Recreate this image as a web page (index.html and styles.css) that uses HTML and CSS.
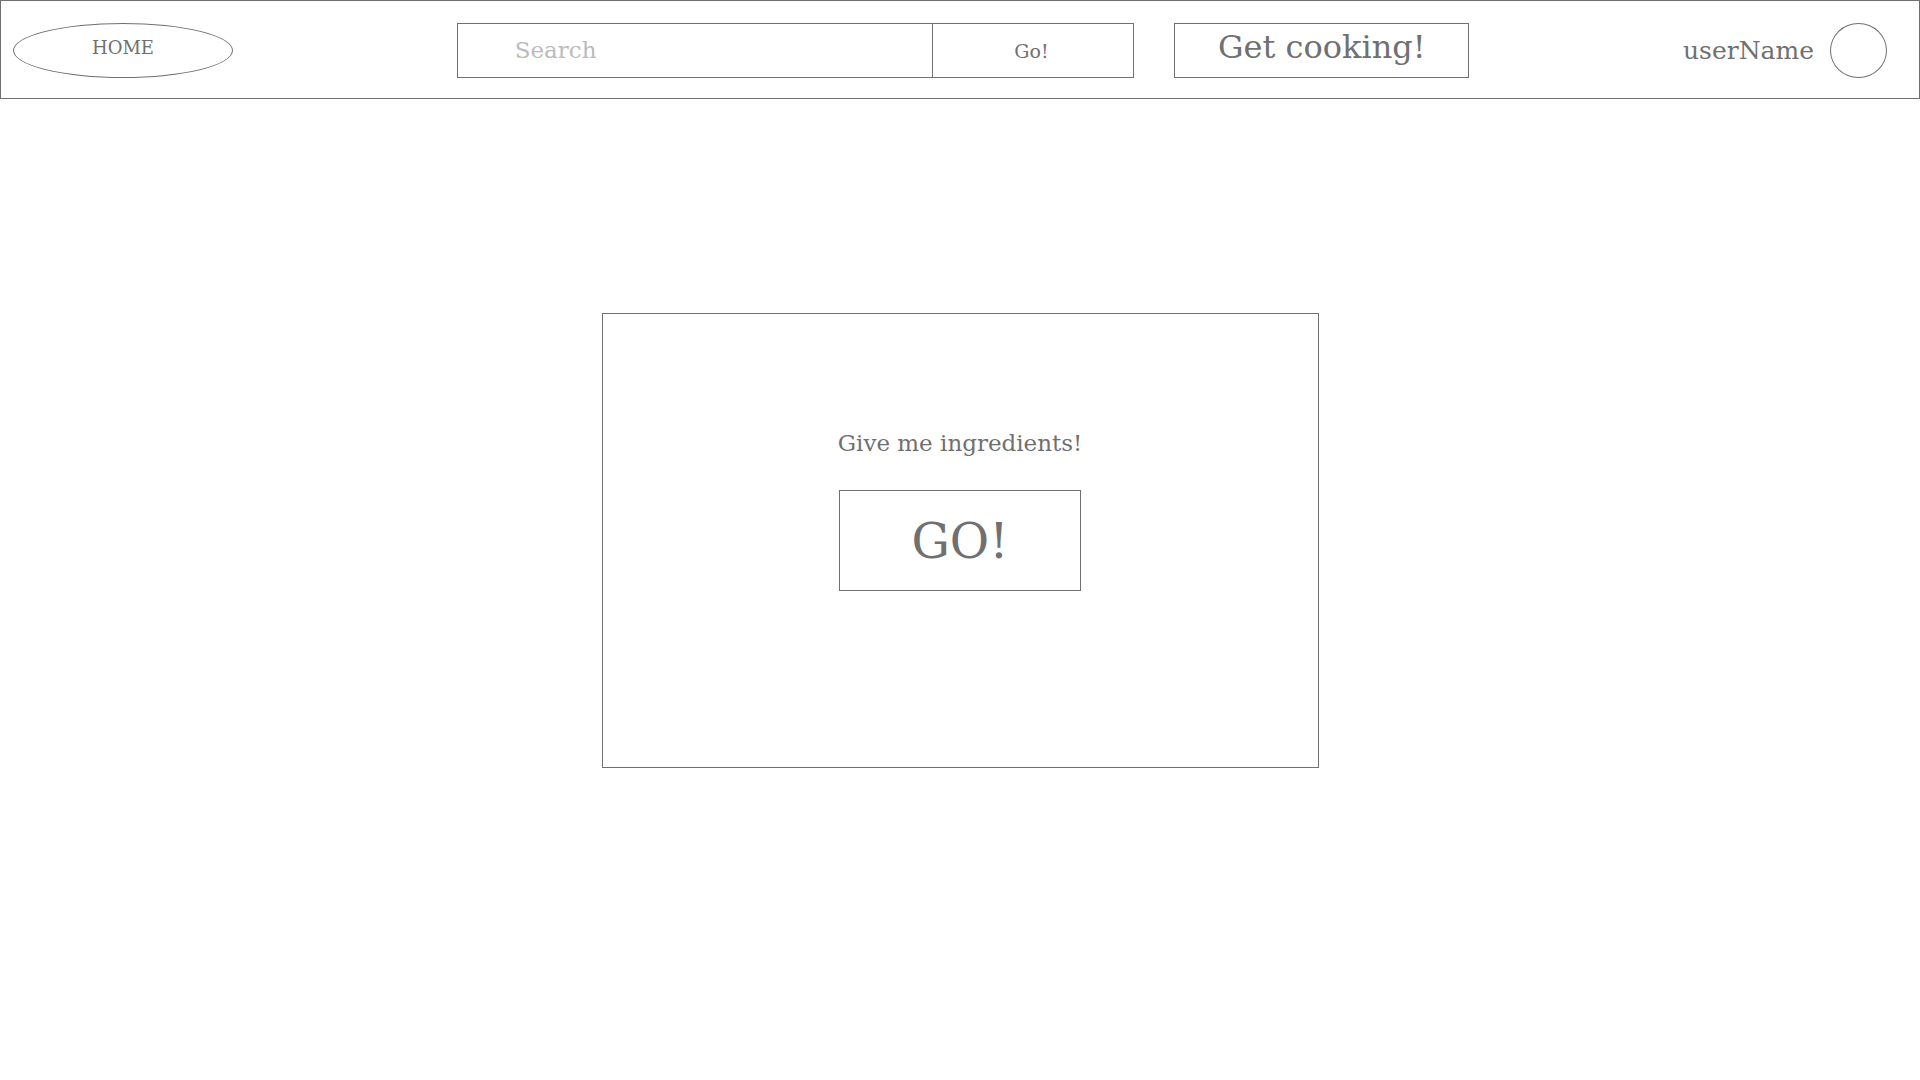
FILE: index.html
```html
<!DOCTYPE html>
<html lang="en">
<head>
<meta charset="utf-8">
<meta name="viewport" content="width=device-width, initial-scale=1">
<title>Get cooking!</title>
<link rel="stylesheet" href="styles.css">
</head>
<body>
<header class="topbar">
  <a class="home" href="#">HOME</a>
  <form class="search">
    <input class="search-input" type="text" placeholder="Search" aria-label="Search">
    <button class="search-go" type="button">Go!</button>
  </form>
  <button class="cook" type="button">Get cooking!</button>
  <a class="user" href="#">
    <span>userName</span>
    <span class="avatar"></span>
  </a>
</header>
<main class="main">
  <section class="card">
    <h1 class="card-title">Give me ingredients!</h1>
    <button class="card-go" type="button">GO!</button>
  </section>
</main>
</body>
</html>
```
FILE: styles.css
```css
* {
  box-sizing: border-box;
}

body {
  margin: 0;
  background: #fff;
  color: #707070;
  font-family: Rockwell, "DejaVu Serif", serif;
}

a {
  color: inherit;
  text-decoration: none;
}

button,
input {
  margin: 0;
  padding: 0;
  border: 1px solid #707070;
  border-radius: 0;
  background: #fff;
  color: inherit;
  font-family: inherit;
}

button {
  cursor: pointer;
}

.topbar {
  display: grid;
  grid-template-columns: 444fr 678fr 40fr 295fr 418fr;
  padding: 22px 32px 20px 12px;
  border: 1px solid #707070;
}

.home {
  display: flex;
  align-items: center;
  justify-content: center;
  width: 220px;
  height: 55px;
  padding-bottom: 6px;
  border: 1px solid #707070;
  border-radius: 50%;
  font-size: 18px;
}

.search {
  display: grid;
  grid-template-columns: 476fr 202fr;
  height: 55px;
}

.search-input {
  width: 100%;
  padding: 0 0 2px 57px;
  border-right: 0;
  font-size: 23px;
}

.search-input::placeholder {
  color: #bbb;
  opacity: 1;
}

.search-go {
  padding-right: 4px;
  font-size: 19px;
}

.cook {
  grid-column: 4;
  height: 55px;
  padding-bottom: 8px;
  font-size: 32px;
  white-space: nowrap;
}

.user {
  display: flex;
  align-items: center;
  justify-content: flex-end;
  gap: 16px;
  font-size: 25px;
}

.avatar {
  width: 57px;
  height: 55px;
  border: 1px solid #707070;
  border-radius: 50%;
}

.main {
  padding: 214px 16px 32px;
}

.card {
  display: flex;
  flex-direction: column;
  align-items: center;
  gap: 32px;
  max-width: 717px;
  min-height: 455px;
  margin: 0 auto;
  padding: 114px 16px;
  border: 1px solid #707070;
}

.card-title {
  margin: 0;
  font-size: 23px;
  font-weight: 400;
  line-height: 30px;
}

.card-go {
  width: 242px;
  height: 101px;
  font-size: 48px;
}
```
